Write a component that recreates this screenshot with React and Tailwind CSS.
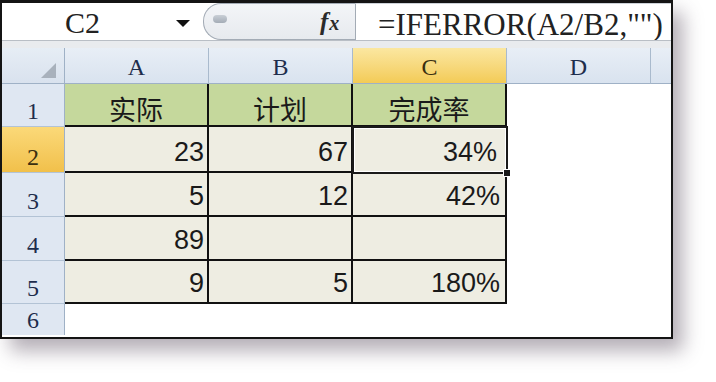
import React from "react";

const serif = { fontFamily: '"Liberation Serif", "DejaVu Serif", serif' };
const sans = { fontFamily: '"Liberation Sans", Arial, sans-serif' };
const cjk = { fontFamily: '"Noto Sans CJK SC", "Noto Sans", sans-serif' };

function ColHead({ label, active, last }) {
  return (
    <div
      className={
        "flex items-end justify-center pb-[4px] border-b border-b-[#9fb1c6] text-[24px] leading-none " +
        (last ? "" : "border-r border-r-[#a9bacd] ") +
        (active
          ? "bg-gradient-to-b from-[#fbe7a0] to-[#f3cb55] text-[#3a2f10]"
          : "bg-gradient-to-b from-[#e8eef6] to-[#d9e3ef] text-[#1e2d4c]")
      }
      style={serif}
    >
      {label}
    </div>
  );
}

function RowHead({ n, active, last }) {
  return (
    <div
      className={
        "flex items-end justify-center pb-[3px] border-r border-r-[#9fb1c6] text-[24px] leading-none " +
        (last ? "" : "border-b border-b-[#b3c3d5] ") +
        (active
          ? "bg-gradient-to-b from-[#fbd978] to-[#f1c04a] text-[#3a2f10]"
          : "bg-[#dfe7f2] text-[#1e2d4c]")
      }
      style={serif}
    >
      {n}
    </div>
  );
}

function Cell({ children, head, pr = "pr-[3px]" }) {
  return (
    <div
      className={
        "flex items-end border-r-2 border-b-2 border-[#111] leading-none " +
        (head
          ? "justify-center bg-[#c5d89c] pb-[3px] text-[27px] text-[#1a1a1a]"
          : "justify-end bg-[#eeede2] pb-[5px] text-[27px] text-[#1a1a1a] " + pr)
      }
      style={head ? cjk : sans}
    >
      {children}
    </div>
  );
}

function Blank() {
  return <div className="bg-white" />;
}

export default function App() {
  const rows = [
    ["23", "67", "34%"],
    ["5", "12", "42%"],
    ["89", "", ""],
    ["9", "5", "180%"],
  ];
  return (
    <div className="relative w-[716px] h-[382px] bg-white overflow-hidden">
      <div className="w-[673px] h-[339px] border-x-2 border-t-[3px] border-b-2 border-[#141414] bg-white flex flex-col shadow-[10px_12px_18px_rgba(70,55,75,0.4)]">
        {/* formula bar */}
        <div className="h-[37px] flex bg-white">
          <div className="w-[201px] relative flex items-center">
            <span className="ml-[63px] text-[30px] leading-none text-[#222] mt-[3px]" style={serif}>
              C2
            </span>
            <svg className="absolute left-[174px] top-[17px]" width="14" height="8" viewBox="0 0 14 8">
              <path d="M0 0 H14 L7 7 Z" fill="#111" />
            </svg>
          </div>
          <div className="w-[152px] h-[37px] rounded-l-[18px] border border-r-0 border-[#a3abb5] bg-gradient-to-b from-[#f3f5f8] to-[#e7eaee] relative flex items-center">
            <div className="absolute left-[9px] top-[11px] w-[14px] h-[8px] rounded-full bg-gradient-to-b from-[#c9cfd6] to-[#a4acb6]" />
            <span className="absolute left-[116px] top-[5px] text-[25px] italic font-bold leading-none text-[#2a2a2a]" style={serif}>
              f<span className="text-[20px] ml-[1px]">x</span>
            </span>
          </div>
          <div className="flex-1 border-l border-[#a3abb5] border-t border-t-[#cdd2d8] flex items-center">
            <span className="ml-[22px] text-[31px] leading-none text-[#222] mt-[4px] whitespace-nowrap" style={serif}>
              =IFERROR(A2/B2,"")
            </span>
          </div>
        </div>
        {/* separator */}
        <div className="h-[8px] bg-[#e9ebee] border-t border-[#b9bec5]" />
        {/* grid */}
        <div className="grid grid-cols-[63px_144px_144px_154px_144px_20px] grid-rows-[36px_43px_46px_44px_44px_43px_31px]">
          <div className="relative bg-gradient-to-b from-[#e6edf5] to-[#d9e2ee] border-r border-b border-[#9fb1c6]">
            <svg className="absolute left-[39px] top-[15px]" width="15" height="15" viewBox="0 0 15 15">
              <path d="M15 0 V15 H0 Z" fill="#a8b1bc" />
            </svg>
          </div>
          <ColHead label="A" />
          <ColHead label="B" />
          <ColHead label="C" active />
          <ColHead label="D" />
          <ColHead label="" last />

          <RowHead n="1" />
          <Cell head>实际</Cell>
          <Cell head>计划</Cell>
          <Cell head>完成率</Cell>
          <Blank />
          <Blank />

          {rows.map((r, i) => (
            <React.Fragment key={i}>
              <RowHead n={String(i + 2)} active={i === 0} />
              <Cell>{r[0]}</Cell>
              <Cell>{r[1]}</Cell>
              <Cell pr={i === 0 ? "pr-[8px]" : "pr-[5px]"}>{r[2]}</Cell>
              <Blank />
              <Blank />
            </React.Fragment>
          ))}

          <RowHead n="6" last />
          <Blank />
          <Blank />
          <Blank />
          <Blank />
          <Blank />
        </div>
      </div>
      {/* selection overlay for C2 */}
      <div className="absolute left-[352px] top-[126px] w-[156px] h-[48px] border-2 border-[#1a1a1a] pointer-events-none">
        <div className="w-full h-full border border-white" />
      </div>
      <div className="absolute left-[503px] top-[169px] w-[8px] h-[8px] bg-[#1a1a1a] border border-white pointer-events-none" />
    </div>
  );
}
